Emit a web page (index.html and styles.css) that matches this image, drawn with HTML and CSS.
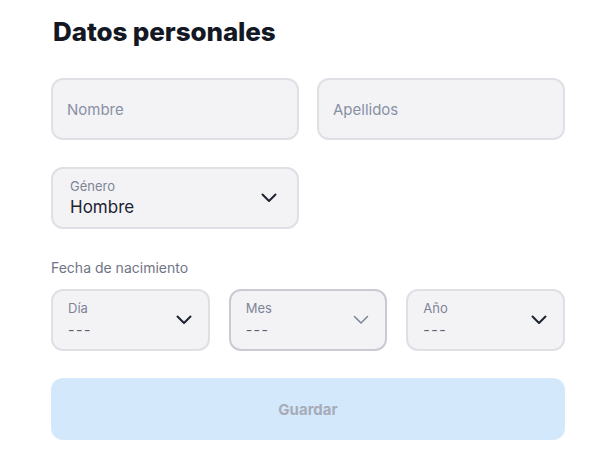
FILE: index.html
```html
<!DOCTYPE html>
<html lang="es">
<head>
<meta charset="utf-8">
<title>Datos personales</title>
<link rel="stylesheet" href="styles.css">
</head>
<body>
<main class="page">
  <h1 class="title">Datos personales</h1>
  <div class="row two">
    <div class="field"><span class="placeholder">Nombre</span></div>
    <div class="field"><span class="placeholder">Apellidos</span></div>
  </div>
  <div class="row two">
    <div class="field select">
      <div class="stack">
        <span class="label">Género</span>
        <span class="value">Hombre</span>
      </div>
      <svg class="chev" viewBox="0 0 16 10" width="16" height="10"><path d="M1.5 1.5 L8 8 L14.5 1.5" fill="none" stroke="#1e2330" stroke-width="2" stroke-linecap="round" stroke-linejoin="round"/></svg>
    </div>
    <div></div>
  </div>
  <div class="date-label">Fecha de nacimiento</div>
  <div class="row three">
    <div class="field select small">
      <div class="stack">
        <span class="label">Día</span>
        <span class="dash">---</span>
      </div>
      <svg class="chev" viewBox="0 0 16 10" width="16" height="10"><path d="M1.5 1.5 L8 8 L14.5 1.5" fill="none" stroke="#1e2330" stroke-width="2" stroke-linecap="round" stroke-linejoin="round"/></svg>
    </div>
    <div class="field select small hover">
      <div class="stack">
        <span class="label">Mes</span>
        <span class="dash">---</span>
      </div>
      <svg class="chev" viewBox="0 0 16 10" width="16" height="10"><path d="M1.5 1.5 L8 8 L14.5 1.5" fill="none" stroke="#7c8394" stroke-width="1.5" stroke-linecap="round" stroke-linejoin="round"/></svg>
    </div>
    <div class="field select small">
      <div class="stack">
        <span class="label">Año</span>
        <span class="dash">---</span>
      </div>
      <svg class="chev" viewBox="0 0 16 10" width="16" height="10"><path d="M1.5 1.5 L8 8 L14.5 1.5" fill="none" stroke="#1e2330" stroke-width="2" stroke-linecap="round" stroke-linejoin="round"/></svg>
    </div>
  </div>
  <button class="save" type="button">Guardar</button>
</main>
</body>
</html>
```
FILE: styles.css
```css
html, body {
  margin: 0;
  padding: 0;
  background: #ffffff;
}
body {
  font-family: "Inter", "Noto Sans", sans-serif;
  color: #1e2330;
}
.page {
  padding: 15px 35px 0 51px;
  display: flex;
  flex-direction: column;
}
.title {
  margin: 0 0 29px 2px;
  font-family: "Inter", sans-serif;
  font-weight: 800;
  font-size: 26px;
  line-height: 34px;
  letter-spacing: -0.1px;
  color: #141824;
}
.row {
  display: grid;
  gap: 18px;
  margin-bottom: 27px;
}
.row.two { grid-template-columns: 1fr 1fr; }
.row.three { grid-template-columns: 1fr 1fr 1fr; gap: 19px; }
.field {
  box-sizing: border-box;
  height: 62px;
  border: 2px solid #dfdfe6;
  border-radius: 12px;
  background: #f3f3f6;
  display: flex;
  align-items: center;
  padding: 0 14px;
}
.field.hover { border-color: #c9cad3; }
.placeholder {
  font-size: 15px;
  color: #8990a4;
}
.select { justify-content: space-between; padding-left: 17px; padding-right: 20px; }
.small { padding-left: 15px; padding-right: 16px; }
.stack {
  display: flex;
  flex-direction: column;
  gap: 2px;
}
.small .stack { gap: 3px; }
.label {
  font-size: 13px;
  line-height: 16px;
  color: #7e8596;
}
.value {
  font-size: 17px;
  line-height: 23px;
  color: #1e2330;
}
.dash {
  font-size: 14px;
  line-height: 22px;
  color: #5a6070;
  letter-spacing: 1.5px;
}
.chev { display: block; }
.date-label {
  font-size: 14px;
  line-height: 18px;
  color: #6f7585;
  margin: 3px 0 12px 0;
}
.save {
  height: 62px;
  border: none;
  border-radius: 12px;
  background: #d3e8fb;
  color: #a6acb8;
  font-family: "Inter", "Noto Sans", sans-serif;
  font-weight: 700;
  font-size: 15px;
  margin: 0;
  padding: 0;
}
```
